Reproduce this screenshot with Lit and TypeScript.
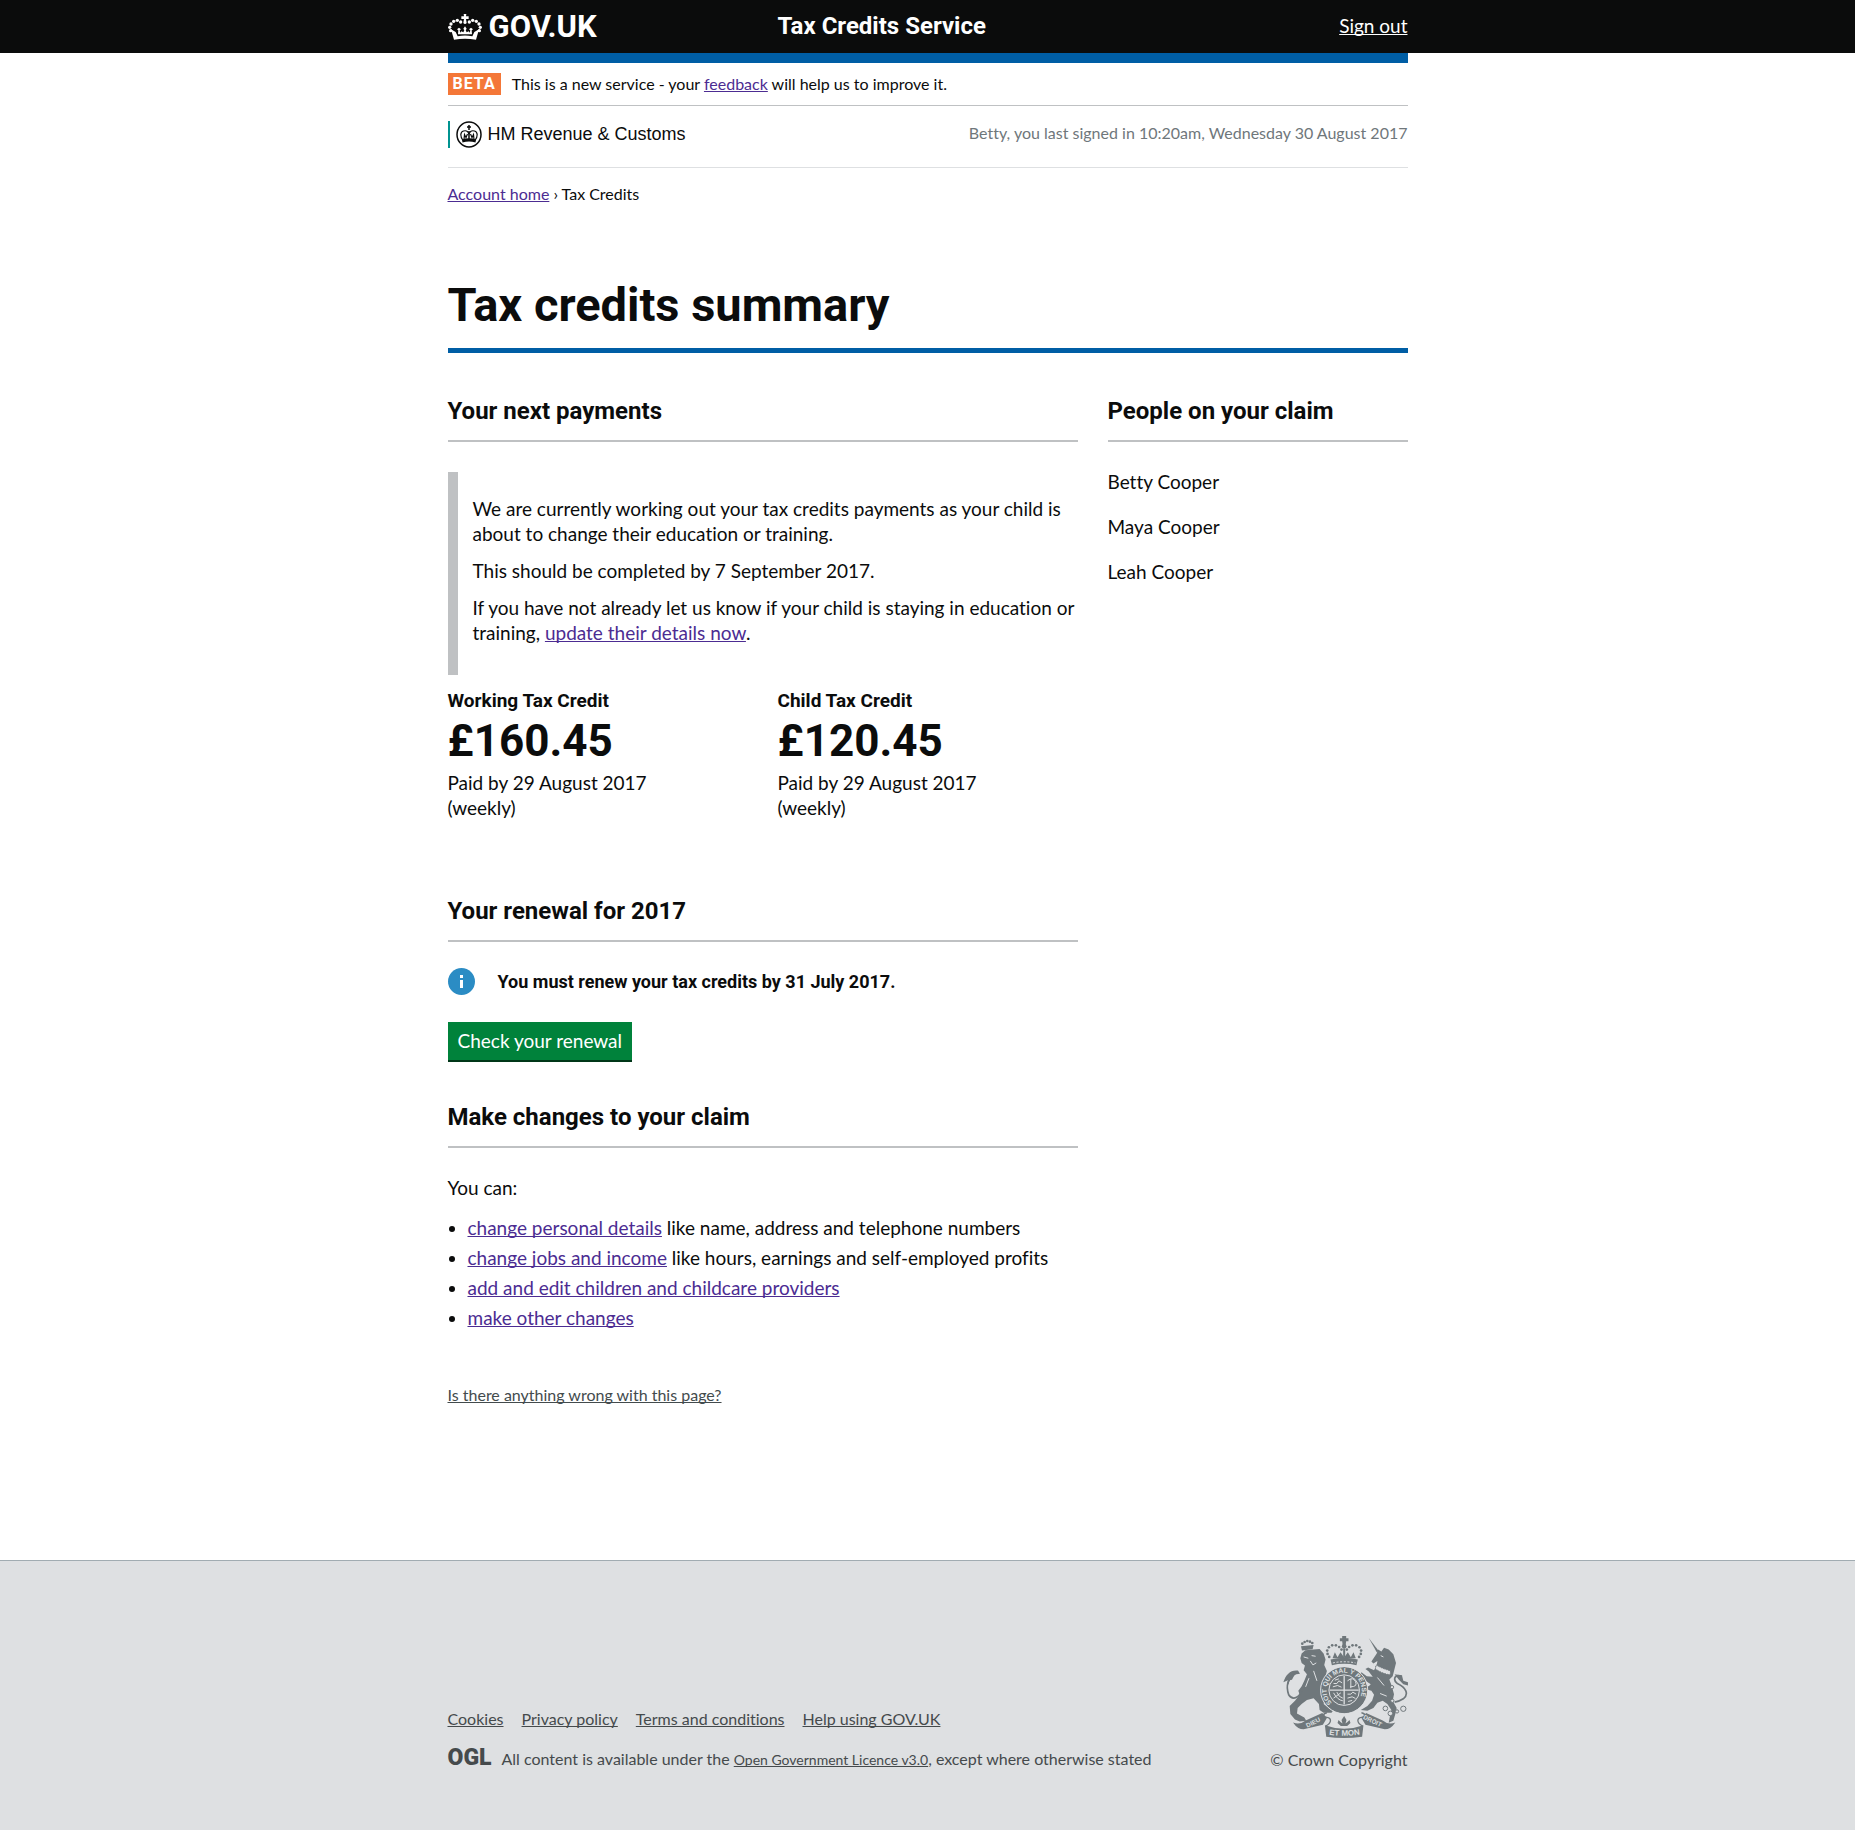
import { LitElement, html, css, svg } from "lit";
import { customElement } from "lit/decorators.js";

interface Credit {
  name: string;
  amount: string;
}

interface Change {
  link: string;
  rest: string;
}

const credits: Credit[] = [
  { name: "Working Tax Credit", amount: "£160.45" },
  { name: "Child Tax Credit", amount: "£120.45" },
];

const people = ["Betty Cooper", "Maya Cooper", "Leah Cooper"];

const changes: Change[] = [
  { link: "change personal details", rest: " like name, address and telephone numbers" },
  { link: "change jobs and income", rest: " like hours, earnings and self-employed profits" },
  { link: "add and edit children and childcare providers", rest: "" },
  { link: "make other changes", rest: "" },
];

const footerLinks = ["Cookies", "Privacy policy", "Terms and conditions", "Help using GOV.UK"];

const beads = (points: number[][], r: number) =>
  points.map(([x, y]) => svg`<circle cx=${x} cy=${y} r=${r}></circle>`);

const crownBeads = [
  [7, 50], [4, 40], [8, 30], [16, 22], [27, 19], [37, 24],
  [93, 50], [96, 40], [92, 30], [84, 22], [73, 19], [63, 24],
];

const crown = html`<svg class="crown" viewBox="0 0 100 78" aria-hidden="true" fill="currentColor">
  ${beads(crownBeads, 5)}
  <path d="M46 0h8l-1 7h8v8h-8l2 12a6 6 0 0 1-10 0l2-12h-8V7h8z"></path>
  <path d="M8 46l14 8 6 13c15-3 29-3 44 0l6-13 14-8-9 31c-22-4-44-4-66 0z"></path>
  <path d="M50 37l5 7-3 5 3 6 6-3 3 4 2-7-4-3 6-5 6 5-4 3 1 12-42 0 1-12-4-3 6-5 6 5-4 3 2 7 3-4 6 3 3-6-3-5z"></path>
</svg>`;

const badge = html`<svg class="badge" viewBox="0 0 52 54" aria-hidden="true">
  <ellipse cx="26" cy="27" rx="24" ry="25" fill="#fff" stroke="#0b0c0c" stroke-width="3"></ellipse>
  <g fill="none" stroke="#0b0c0c" stroke-width="2.4">
    <path d="M14 39C8 31 8 22 15 20s10 2 11 7c1-5 4-9 11-7s7 11 1 19"></path>
    <path d="M26 8v10M22 12h8M26 20v18" stroke-width="3"></path>
    <path d="M16 37l1-10 3 6 3-7M36 37l-1-10-3 6-3-7"></path>
  </g>
  <path d="M12 37q14-5 28 0l-1 6q-13-4-26 0z" fill="#0b0c0c"></path>
</svg>`;

const info = html`<svg class="info" viewBox="0 0 27 27" aria-hidden="true">
  <circle cx="13.5" cy="13.5" r="13.5" fill="#2b8cc4"></circle>
  <path d="M12 7h3v3h-3zM12 12h3v8h-3z" fill="#fff"></path>
</svg>`;

const arms = html`<svg class="arms" viewBox="68 42 376 310" role="img" aria-label="Royal coat of arms">
  <defs>
    <path id="garter" d="M217 248A53 53 0 1 1 287 248"></path>
    <path id="motto" d="M202 341Q252 350 304 341"></path>
  </defs>
  <g fill="#6f777b">
    <path d="M124 98l11-10 25-2 18-2 12 14 6 18-4 16 8 18-4 15 10 15 6 10-12 15-10 7 6 23-6 15 16 12 14 6-6 8h-24l-12-8-2-18-16-18-20 6-16 12-12 12-2 16 22 12 6 10-20 2-14-6-14-16-2-24 16-16 14-18-4-12 10-14 8-16 8-20-10-12 4-14-10-8-4-14z"></path>
    <path d="M122 76l38-4-3 13-32 4z"></path>
    <path d="M69 184c8-24 22-38 44-35l6 10-16 2-8 16-14 2z"></path>
    <path d="M334 122l16-24 4-12 10 6 8-12 14 6 14 14 8 26-6 24-4 16-10 10 8 22 6 22-4 20 12 22-4 18-6 20-14 6 4-22 4-16-12-18-14-10-16 6-12 16-18 8-20-2 20-12 14-16 6-18-8-12-14-4-10-12 16 2 6-6-18-12-16-14 6-10 16 12 18 2-12-16-10-8 8-4 18 8 8-16 2-12-12 8z"></path>
    <path d="M326 51l30 39-6 4z"></path>
    <path d="M404 160l22 4 4 16 14 4v10l-14-4-14-14z"></path>
    <circle cx="252" cy="208" r="70"></circle>
    <path d="M211 116q41-11 82 0l-4 17q-37-9-74 0z"></path>
    <path d="M217 112l7-18 8 15 9-15 11 16 11-16 9 15 8-15 7 18z"></path>
    <path d="M246 45h12v7h7v9h-7l-2 15h-8l-2-15h-7v-9h7z"></path>
    <circle cx="252" cy="76" r="7"></circle>
    <path d="M194 314q58 21 116 0l-4 34q-54 8-108 0z"></path>
    <path d="M98 305q20 9 38-6l50-22 14 15-12 20-58 14q-18 0-32-21z"></path>
    <path d="M406 305q-20 9-38-6l-50-22-14 15 12 20 58 14q18 0 32-21z"></path>
    <path d="M252 286l7 12-3 10 6-4 6-6 3 9-10 9h-19l-10-9 3-9 6 6 6 4-3-10z"></path>
    ${beads([[126, 68], [133, 63], [141, 60], [149, 62], [156, 66]], 4)}
    ${beads([[207, 108], [202, 99], [201, 89], [206, 79], [216, 73], [227, 73], [237, 78], [244, 86], [297, 108], [302, 99], [303, 89], [298, 79], [288, 73], [277, 73], [267, 78], [260, 86]], 4)}
  </g>
  <g fill="none" stroke="#6f777b" stroke-width="5">
    <path d="M108 156c-28 20-32 40-23 66 14 22 36 2 38-12"></path>
    <path d="M82 190c2-14 8-22 18-28M426 166c-26-8-26 14-14 22 26 12 36 32 18 46q-12 8-26 10"></path>
    <path d="M252 82v28" stroke-width="6"></path>
    <path d="M196 316c20-10 18-24 4-26s-12-12 0-14M308 316c-20-10-18-24-4-26s12-12 0-14" stroke-width="4"></path>
  </g>
  <g fill="#dee0e2" stroke="#6f777b" stroke-width="3">
    <circle cx="376" cy="263" r="7"></circle><circle cx="391" cy="278" r="7"></circle>
    <circle cx="411" cy="272" r="5"></circle><circle cx="430" cy="264" r="8"></circle>
    <circle cx="396" cy="199" r="5"></circle><circle cx="397" cy="240" r="5"></circle>
    <path d="M348 132q20 12 44 18l-2 12q-24-4-44-18z" stroke-dasharray="5 3"></path>
  </g>
  <g fill="none" stroke="#dee0e2">
    <circle cx="252" cy="208" r="71" stroke-width="3"></circle>
    <circle cx="252" cy="208" r="46" stroke-width="3"></circle>
    <path d="M252 165v86M208 208h88" stroke-width="4"></path>
    <path d="M220 188h10l6-8 10 6M218 198l14-4 12 5M224 178l12-4M262 180q16-14 24 2t-16 16M272 174v28M220 216q12 22 28 24M230 214q6 16 18 18M220 232l22-16M262 220h10l6-6 10 6M262 232l14-4 10 5M264 242l12-3" stroke-width="3"></path>
    <path d="M130 108l14 4M154 104l12 2M150 120l8 12 10-6M146 172l-10 26M160 150l10 30M362 104l8 4M352 170l20 24M360 218l20 8" stroke-width="3"></path>
    <path d="M218 126q34-7 68 0" stroke-width="3" stroke-dasharray="6 5"></path>
  </g>
  <g class="armstext" fill="#dee0e2" aria-hidden="true">
    <text font-size="20"><textPath href="#garter" startOffset="2">SOIT QUI MAL Y PENSE</textPath></text>
    <text font-size="24"><textPath href="#motto" startOffset="50%" text-anchor="middle">ET MON</textPath></text>
    <text font-size="19" transform="translate(141 321) rotate(-26)">DIEU</text>
    <text font-size="19" transform="translate(308 293) rotate(26)">DROIT</text>
  </g>
</svg>`;

@customElement("app-root")
export class AppRoot extends LitElement {
  static styles = css`
    :host {
      display: block;
      min-height: 100vh;
      background: #fff;
      color: #0b0c0c;
      font: 400 19px/25px Lato, "Liberation Sans", sans-serif;
      font-variant-ligatures: none;
    }
    h1, h2, h3, p, ul { margin: 0; padding: 0; font-size: inherit; }
    h1, h2, h3, .logo, .service, .tag, .amount, .must { font-family: Roboto, "Liberation Sans", sans-serif; font-weight: 700; }
    svg { display: block; flex: none; }
    a { color: #4c2c92; text-decoration-skip-ink: none; }
    .wrap { max-width: 960px; margin: 0 auto; }

    .top { background: #0b0c0c; color: #fff; }
    .top a { color: #fff; }
    .top .wrap { display: grid; grid-template-columns: 330px 1fr auto; align-items: center; height: 53px; }
    .top .logo { display: flex; align-items: center; gap: 7px; font-size: 31px; line-height: 30px; text-decoration: none; }
    .crown { width: 34px; height: 26px; }
    .service { font-size: 24px; line-height: 30px; }
    .service, .sign-out { padding-bottom: 2px; }

    .small { font-size: 16px; line-height: 20px; }
    .phase { display: flex; align-items: center; gap: 11px; height: 42px; border-top: 10px solid #005ea5; border-bottom: 1px solid #bfc1c3; }
    .tag { padding: 1px 5px; background: #f47738; color: #fff; letter-spacing: 1px; }
    .account { display: flex; align-items: flex-start; justify-content: space-between; padding: 15px 0 19px; border-bottom: 1px solid #dee0e2; }
    .hmrc { display: flex; align-items: center; gap: 6px; padding-left: 6px; border-left: 2px solid #009390; font: 400 18px/27px "Liberation Sans", Arial, sans-serif; }
    .badge { width: 26px; height: 27px; }
    .signed { padding-top: 2px; color: #6f777b; }
    .crumbs { padding-top: 16px; }

    h1 { margin-top: 76px; padding-bottom: 18px; border-bottom: 5px solid #005ea5; font-size: 47px; line-height: 50px; }
    .columns { display: grid; grid-template-columns: minmax(0, 630fr) minmax(0, 300fr); gap: 30px; padding-top: 43px; }
    h2 { padding-bottom: 14px; border-bottom: 2px solid #bfc1c3; font-size: 24px; line-height: 30px; }
    .notice { display: grid; gap: 12px; margin-top: 30px; padding: 24px 0 30px 15px; border-left: 10px solid #bfc1c3; }
    .credits { display: grid; grid-template-columns: 1fr 1fr; gap: 30px; margin: 13px 0 76px; }
    .amount { font-size: 44px; line-height: 56px; margin-bottom: 1px; }
    .paid { max-width: 210px; }
    .must { display: flex; align-items: center; gap: 23px; margin: 26px 0 27px; font-size: 18px; }
    .info { width: 27px; height: 27px; }
    .renew { display: block; margin-bottom: 40px; padding: 6px 10px 7px; border: 0; border-bottom: 2px solid #003618; background: #00823b; color: #fff; font: inherit; }
    .can { margin: 27px 0 15px; }
    .changes { display: grid; gap: 5px; padding-left: 20px; }
    .report { margin: 55px 0 155px; }
    .report a { color: #434b4d; }
    .people { display: grid; gap: 20px; margin-top: 27px; list-style: none; }

    footer { border-top: 1px solid #a1acb2; background: #dee0e2; color: #454a4c; }
    footer a { color: inherit; }
    footer .wrap { display: flex; align-items: flex-end; justify-content: space-between; padding: 74px 0 61px; }
    .links { display: flex; gap: 18px; margin-bottom: 20px; list-style: none; }
    .licence { display: flex; gap: 10px; }
    .ogl { font: 900 23px/18px Roboto, sans-serif; }
    .licence a { font-size: 14px; }
    .crown-copy { display: grid; justify-items: end; gap: 12px; }
    .arms { width: 125px; height: 103px; }
    .armstext { font-family: "Liberation Sans", sans-serif; font-weight: 700; }
  `;

  render() {
    return html`
      <header class="top">
        <div class="wrap">
          <a class="logo" href="#home">${crown}<span>GOV.UK</span></a>
          <span class="service">Tax Credits Service</span>
          <a class="sign-out" href="#sign-out">Sign out</a>
        </div>
      </header>
      <div class="wrap">
        <div class="phase small">
          <span class="tag">BETA</span>
          <span>This is a new service - your <a href="#feedback">feedback</a> will help us to improve it.</span>
        </div>
        <div class="account">
          <div class="hmrc">${badge}<span>HM Revenue &amp; Customs</span></div>
          <span class="signed small">Betty, you last signed in 10:20am, Wednesday 30 August 2017</span>
        </div>
        <nav class="crumbs small"><a href="#account">Account home</a> › Tax Credits</nav>
        <main>
          <h1>Tax credits summary</h1>
          <div class="columns">
            <div>
              <h2>Your next payments</h2>
              <div class="notice">
                <p>We are currently working out your tax credits payments as your child is about to change their education or training.</p>
                <p>This should be completed by 7 September 2017.</p>
                <p>If you have not already let us know if your child is staying in education or training, <a href="#details">update their details now</a>.</p>
              </div>
              <div class="credits">
                ${credits.map((c) => html`<section>
                  <h3>${c.name}</h3>
                  <p class="amount">${c.amount}</p>
                  <p class="paid">Paid by 29 August 2017 (weekly)</p>
                </section>`)}
              </div>
              <h2>Your renewal for 2017</h2>
              <p class="must">${info}<span>You must renew your tax credits by 31 July 2017.</span></p>
              <button class="renew" type="button">Check your renewal</button>
              <h2>Make changes to your claim</h2>
              <p class="can">You can:</p>
              <ul class="changes">
                ${changes.map((c) => html`<li><a href="#change">${c.link}</a>${c.rest}</li>`)}
              </ul>
              <p class="report small"><a href="#report">Is there anything wrong with this page?</a></p>
            </div>
            <aside>
              <h2>People on your claim</h2>
              <ul class="people">${people.map((p) => html`<li>${p}</li>`)}</ul>
            </aside>
          </div>
        </main>
      </div>
      <footer class="small">
        <div class="wrap">
          <div>
            <ul class="links">${footerLinks.map((l) => html`<li><a href="#footer">${l}</a></li>`)}</ul>
            <div class="licence">
              <span class="ogl">OGL</span>
              <span>All content is available under the <a href="#licence">Open Government Licence v3.0</a>, except where otherwise stated</span>
            </div>
          </div>
          <div class="crown-copy">${arms}<span>© Crown Copyright</span></div>
        </div>
      </footer>
    `;
  }
}
